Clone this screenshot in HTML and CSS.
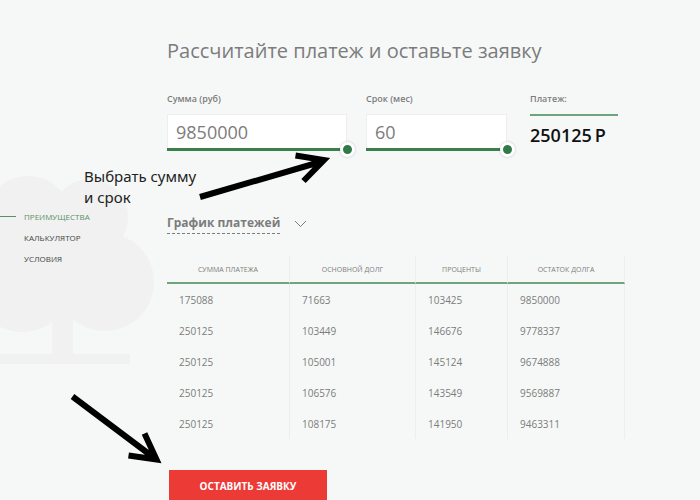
FILE: index.html
```html
<!DOCTYPE html>
<html lang="ru">
<head>
    <meta charset="UTF-8">
    <meta name="viewport" content="width=device-width, initial-scale=1.0">
    <title>Калькулятор</title>
    <link rel="stylesheet" href="styles.css">
</head>
<body>
    <svg class="tree" width="160" height="200" viewBox="0 170 160 200" aria-hidden="true">
        <circle cx="28" cy="220" r="44"/>
        <circle cx="90" cy="217" r="38"/>
        <circle cx="22" cy="283" r="49"/>
        <circle cx="105" cy="282" r="49"/>
        <path d="M0 220h100v70H0zM52 290h21v64h57v10H0v-10h52z"/>
    </svg>

    <nav class="side-nav">
        <a class="active" href="#benefits">ПРЕИМУЩЕСТВА</a>
        <a href="#calculator">КАЛЬКУЛЯТОР</a>
        <a href="#terms">УСЛОВИЯ</a>
    </nav>

    <main class="calculator" id="calculator">
        <h1>Рассчитайте платеж и оставьте заявку</h1>

        <form class="fields">
            <div class="field">
                <label for="sum">Сумма (руб)</label>
                <input type="text" class="value" id="sum" value="9850000">
                <input type="range" class="slider" min="0" max="9850000" value="9850000" aria-label="Сумма">
            </div>
            <div class="field">
                <label for="term">Срок (мес)</label>
                <input type="text" class="value" id="term" value="60">
                <input type="range" class="slider" min="0" max="60" value="60" aria-label="Срок">
            </div>
            <div class="payment">
                <label for="payment">Платеж:</label>
                <output id="payment">250125&thinsp;Р</output>
            </div>
        </form>

        <button type="button" class="schedule-toggle">
            <span>График платежей</span>
            <svg width="13" height="8" viewBox="0 0 13 8" aria-hidden="true">
                <path d="M1 1l5.500 5.500L12 1"/>
            </svg>
        </button>

        <table class="schedule">
            <colgroup>
                <col class="col-sum">
                <col class="col-debt">
                <col class="col-percent">
                <col class="col-rest">
            </colgroup>
            <thead>
                <tr><th>СУММА ПЛАТЕЖА</th><th>ОСНОВНОЙ ДОЛГ</th><th>ПРОЦЕНТЫ</th><th>ОСТАТОК ДОЛГА</th></tr>
            </thead>
            <tbody>
                <tr><td>175088</td><td>71663</td><td>103425</td><td>9850000</td></tr>
                <tr><td>250125</td><td>103449</td><td>146676</td><td>9778337</td></tr>
                <tr><td>250125</td><td>105001</td><td>145124</td><td>9674888</td></tr>
                <tr><td>250125</td><td>106576</td><td>143549</td><td>9569887</td></tr>
                <tr><td>250125</td><td>108175</td><td>141950</td><td>9463311</td></tr>
            </tbody>
        </table>

        <button type="button" class="submit">ОСТАВИТЬ ЗАЯВКУ</button>
    </main>

    <!-- hints over the page -->
    <p class="hint">Выбрать сумму<br>и срок</p>
    <svg class="arrow arrow-slider" width="140" height="60" viewBox="195 145 140 60" aria-hidden="true">
        <path d="M200 197L320 162M295.500 155.500L324 160L303.500 181"/>
    </svg>
    <svg class="arrow arrow-submit" width="100" height="80" viewBox="65 390 100 80" aria-hidden="true">
        <path d="M72.500 396.500L153 457M144.500 433.500L156.500 459.500L128.500 455.500"/>
    </svg>
</body>
</html>
```
FILE: styles.css
```css
* {
    box-sizing: border-box;
}
body {
    display: grid;
    grid-template-columns: 167px 1fr;
    position: relative;
    min-height: 100vh;
    margin: 0;
    background-color: #f6f8f7;
    color: #7c7c7c;
    font-family: 'Open Sans', 'Noto Sans', sans-serif;
    overflow: hidden;
}
.tree {
    position: absolute;
    left: 0;
    top: 170px;
    fill: #f0f1f0;
}
.side-nav {
    display: flex;
    flex-direction: column;
    position: relative;
    padding-top: 206px;
}
.side-nav a {
    display: flex;
    align-items: center;
    padding-left: 24px;
    color: #444;
    font-size: 8px;
    line-height: 21px;
    text-decoration: none;
}
.side-nav .active {
    gap: 8px;
    padding-left: 0;
    color: #5d9068;
}
.side-nav .active::before {
    content: "";
    width: 16px;
    height: 1px;
    background-color: #5d9068;
}
.calculator {
    padding: 36px 75px 0 0;
}
h1 {
    margin: 0;
    font-size: 20px;
    font-weight: 400;
    line-height: 30px;
}
.fields {
    display: grid;
    grid-template-columns: 180fr 141fr 92fr;
    gap: 19px;
    margin: 26px 7px 0 0;
}
.field {
    display: flex;
    flex-direction: column;
}
label {
    display: block;
    height: 22px;
    font-size: 9px;
    font-weight: 600;
    line-height: 14px;
}
.value {
    width: 100%;
    height: 34px;
    padding: 0 8px;
    border: 1px solid #eee;
    border-bottom: none;
    background-color: #fff;
    color: #7c7c7c;
    font-family: inherit;
    font-size: 18px;
}
.slider {
    position: relative;
    width: calc(100% + 8px);
    height: 15px;
    margin: -6px 0 0;
    appearance: none;
    background: linear-gradient(#3b7f4c, #3b7f4c) left center / calc(100% - 8px) 3px no-repeat;
}
.slider::-webkit-slider-thumb {
    appearance: none;
    width: 15px;
    height: 15px;
    border: 3px solid #fff;
    border-radius: 50%;
    background-color: #2f7a46;
    box-shadow: 0 0 3px rgba(0, 0, 0, 0.2);
}
.payment {
    padding-left: 4px;
}
.payment output {
    display: block;
    padding-top: 5px;
    border-top: 2px solid #6fa47c;
    color: #111;
    font-size: 18px;
    font-weight: 600;
    line-height: 28px;
    white-space: nowrap;
}
.schedule-toggle {
    display: flex;
    align-items: center;
    gap: 14px;
    margin-top: 56px;
    padding: 0;
    border: none;
    background: none;
    color: #7c7c7c;
    font-family: inherit;
    font-size: 12px;
    font-weight: 700;
    cursor: pointer;
}
.schedule-toggle span {
    border-bottom: 1px dashed #7c7c7c;
    line-height: 20px;
}
.schedule-toggle svg {
    fill: none;
    stroke: #7c7c7c;
}
.schedule {
    width: 100%;
    margin-top: 22px;
    border-collapse: separate;
    border-spacing: 0;
    table-layout: fixed;
    font-size: 10px;
}
.col-sum {
    width: 123px;
}
.col-debt {
    width: 126px;
}
.col-percent {
    width: 92px;
}
.schedule th {
    height: 28px;
    padding: 0;
    border-right: 1px solid #eceeed;
    border-bottom: 2px solid #6fa47c;
    font-size: 7px;
    font-weight: 500;
}
.schedule td {
    height: 31px;
    padding: 0 12px;
    border-right: 1px solid #eceeed;
}
.submit {
    display: block;
    width: 158px;
    height: 31px;
    margin: 31px 0 0 2px;
    border: none;
    background-color: #ec3a37;
    color: #fff;
    font-family: inherit;
    font-size: 10px;
    font-weight: 700;
    cursor: pointer;
}
.hint {
    position: absolute;
    left: 84px;
    top: 166px;
    margin: 0;
    color: #222;
    font-family: 'Noto Sans', sans-serif;
    font-size: 15px;
    line-height: 21px;
}
.arrow {
    position: absolute;
    fill: none;
    stroke: #000;
    stroke-width: 6px;
}
.arrow-slider {
    left: 195px;
    top: 145px;
}
.arrow-submit {
    left: 65px;
    top: 390px;
}
```
